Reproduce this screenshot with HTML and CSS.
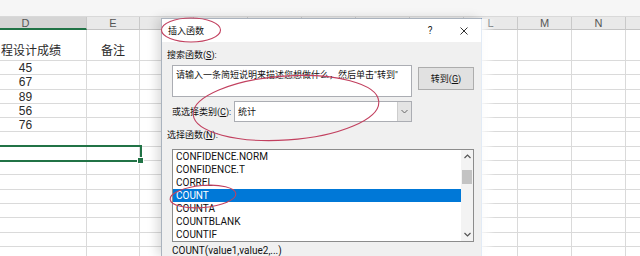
FILE: index.html
```html
<!DOCTYPE html>
<html>
<head>
<meta charset="utf-8">
<link rel="stylesheet" href="styles.css">
</head>
<body>
<div class="sheet">
  <div class="topbar"></div>
  <div class="row hdr">
    <div class="cell cd">D</div><div class="cell ce">E</div><div class="cell">F</div><div class="cell">G</div><div class="cell">H</div><div class="cell">I</div><div class="cell">J</div><div class="cell">K</div><div class="cell">L</div><div class="cell">M</div><div class="cell">N</div><div class="cell"></div>
  </div>
  <div class="row tall">
    <div class="cell cd lft">程设计成绩</div><div class="cell ce">备注</div><div class="cell"></div><div class="cell"></div><div class="cell"></div><div class="cell"></div><div class="cell"></div><div class="cell"></div><div class="cell"></div><div class="cell"></div><div class="cell"></div><div class="cell"></div>
  </div>
  <div class="row"><div class="cell cd">45</div><div class="cell ce"></div><div class="cell"></div><div class="cell"></div><div class="cell"></div><div class="cell"></div><div class="cell"></div><div class="cell"></div><div class="cell"></div><div class="cell"></div><div class="cell"></div><div class="cell"></div></div>
  <div class="row"><div class="cell cd">67</div><div class="cell ce"></div><div class="cell"></div><div class="cell"></div><div class="cell"></div><div class="cell"></div><div class="cell"></div><div class="cell"></div><div class="cell"></div><div class="cell"></div><div class="cell"></div><div class="cell"></div></div>
  <div class="row"><div class="cell cd">89</div><div class="cell ce"></div><div class="cell"></div><div class="cell"></div><div class="cell"></div><div class="cell"></div><div class="cell"></div><div class="cell"></div><div class="cell"></div><div class="cell"></div><div class="cell"></div><div class="cell"></div></div>
  <div class="row"><div class="cell cd">56</div><div class="cell ce"></div><div class="cell"></div><div class="cell"></div><div class="cell"></div><div class="cell"></div><div class="cell"></div><div class="cell"></div><div class="cell"></div><div class="cell"></div><div class="cell"></div><div class="cell"></div></div>
  <div class="row"><div class="cell cd">76</div><div class="cell ce"></div><div class="cell"></div><div class="cell"></div><div class="cell"></div><div class="cell"></div><div class="cell"></div><div class="cell"></div><div class="cell"></div><div class="cell"></div><div class="cell"></div><div class="cell"></div></div>
  <div class="row"><div class="cell cd"></div><div class="cell ce"></div><div class="cell"></div><div class="cell"></div><div class="cell"></div><div class="cell"></div><div class="cell"></div><div class="cell"></div><div class="cell"></div><div class="cell"></div><div class="cell"></div><div class="cell"></div></div>
  <div class="row"><div class="cell cd"></div><div class="cell ce"></div><div class="cell"></div><div class="cell"></div><div class="cell"></div><div class="cell"></div><div class="cell"></div><div class="cell"></div><div class="cell"></div><div class="cell"></div><div class="cell"></div><div class="cell"></div></div>
  <div class="row"><div class="cell cd"></div><div class="cell ce"></div><div class="cell"></div><div class="cell"></div><div class="cell"></div><div class="cell"></div><div class="cell"></div><div class="cell"></div><div class="cell"></div><div class="cell"></div><div class="cell"></div><div class="cell"></div></div>
  <div class="row"><div class="cell cd"></div><div class="cell ce"></div><div class="cell"></div><div class="cell"></div><div class="cell"></div><div class="cell"></div><div class="cell"></div><div class="cell"></div><div class="cell"></div><div class="cell"></div><div class="cell"></div><div class="cell"></div></div>
  <div class="row"><div class="cell cd"></div><div class="cell ce"></div><div class="cell"></div><div class="cell"></div><div class="cell"></div><div class="cell"></div><div class="cell"></div><div class="cell"></div><div class="cell"></div><div class="cell"></div><div class="cell"></div><div class="cell"></div></div>
  <div class="row"><div class="cell cd"></div><div class="cell ce"></div><div class="cell"></div><div class="cell"></div><div class="cell"></div><div class="cell"></div><div class="cell"></div><div class="cell"></div><div class="cell"></div><div class="cell"></div><div class="cell"></div><div class="cell"></div></div>
  <div class="row"><div class="cell cd"></div><div class="cell ce"></div><div class="cell"></div><div class="cell"></div><div class="cell"></div><div class="cell"></div><div class="cell"></div><div class="cell"></div><div class="cell"></div><div class="cell"></div><div class="cell"></div><div class="cell"></div></div>
  <div class="row"><div class="cell cd"></div><div class="cell ce"></div><div class="cell"></div><div class="cell"></div><div class="cell"></div><div class="cell"></div><div class="cell"></div><div class="cell"></div><div class="cell"></div><div class="cell"></div><div class="cell"></div><div class="cell"></div></div>
  <div class="row"><div class="cell cd"></div><div class="cell ce"></div><div class="cell"></div><div class="cell"></div><div class="cell"></div><div class="cell"></div><div class="cell"></div><div class="cell"></div><div class="cell"></div><div class="cell"></div><div class="cell"></div><div class="cell"></div></div>
</div>

<div class="selbox"><span class="handle"></span></div>

<div class="dlg">
  <div class="title">
    <span class="ttext">插入函数</span>
    <span class="sp"></span>
    <span class="tbtn q">?</span>
    <span class="tbtn"><svg width="8" height="8" viewBox="0 0 8 8"><path d="M0.5 0.5 L7.5 7.5 M7.5 0.5 L0.5 7.5" stroke="#333" stroke-width="1" fill="none"/></svg></span>
  </div>
  <div class="body">
    <div class="lbl l1">搜索函数(<u>S</u>):</div>
    <div class="search">
      <div class="tb">请输入一条简短说明来描述您想做什么，然后单击"转到"</div>
      <div class="btn">转到(<u>G</u>)</div>
    </div>
    <div class="cat">
      <div class="lbl clbl">或选择类别(<u>C</u>):</div>
      <div class="combo">
        <span class="ctxt">统计</span>
        <span class="arr"><svg width="7" height="5" viewBox="0 0 7 5"><path d="M0.5 1 L3.5 4 L6.5 1" stroke="#666" stroke-width="1" fill="none"/></svg></span>
      </div>
    </div>
    <div class="lbl l2">选择函数(<u>N</u>):</div>
    <div class="list">
      <div class="items">
        <div class="item">CONFIDENCE.NORM</div>
        <div class="item">CONFIDENCE.T</div>
        <div class="item">CORREL</div>
        <div class="item sel">COUNT</div>
        <div class="item">COUNTA</div>
        <div class="item">COUNTBLANK</div>
        <div class="item">COUNTIF</div>
      </div>
      <div class="sb">
        <span class="sarr"><svg width="7" height="5" viewBox="0 0 7 5"><path d="M0.5 4 L3.5 1 L6.5 4" stroke="#555" stroke-width="1.2" fill="none"/></svg></span>
        <span class="thumb"></span>
        <span class="sgap"></span>
        <span class="sarr"><svg width="7" height="5" viewBox="0 0 7 5"><path d="M0.5 1 L3.5 4 L6.5 1" stroke="#555" stroke-width="1.2" fill="none"/></svg></span>
      </div>
    </div>
    <div class="desc">COUNT(value1,value2,...)</div>
  </div>
</div>

<svg class="marks" width="640" height="256" viewBox="0 0 640 256">
  <ellipse cx="191" cy="30" rx="29.5" ry="12" fill="none" stroke="#c2405f" stroke-width="1.1"/>
  <ellipse cx="286" cy="108" rx="93" ry="32" transform="rotate(-4 286 108)" fill="none" stroke="#c2405f" stroke-width="1.1"/>
  <ellipse cx="203" cy="196.5" rx="33" ry="11" transform="rotate(-5 203 196.5)" fill="none" stroke="#c2405f" stroke-width="1.1"/>
</svg>
</body>
</html>
```

FILE: styles.css
```css
html, body {
  margin: 0;
  padding: 0;
}
body {
  width: 640px;
  height: 256px;
  overflow: hidden;
  position: relative;
  background: #fff;
  font-family: "Liberation Sans", "Noto Sans CJK SC", sans-serif;
}

.sheet {
  width: 640px;
  height: 256px;
  overflow: hidden;
}
.topbar {
  height: 17px;
  box-sizing: border-box;
  background: #f6f6f6;
  border-bottom: 1px solid #d9d9d9;
}
.row {
  display: flex;
  height: 14.3px;
}
.cell {
  flex: none;
  width: 54px;
  box-sizing: border-box;
  border-right: 1px solid #dadada;
  border-bottom: 1px solid #dadada;
  font-size: 12px;
  color: #2a2a2a;
  text-align: center;
  line-height: 15px;
  white-space: nowrap;
}
.cd {
  width: 122px;
  margin-left: -35px;
}
.ce {
  width: 53px;
}
.hdr {
  height: 13px;
}
.hdr .cell {
  background: #e9e9e9;
  border-right-color: #c9c9c9;
  border-bottom-color: #c4c4c4;
  font-size: 11px;
  line-height: 12px;
  color: #555;
}
.hdr .cd {
  background: #d5d5d5;
  border-bottom: 2px solid #217346;
}
.row.tall {
  height: 31px;
}
.tall .cell {
  display: flex;
  align-items: flex-end;
  justify-content: center;
  line-height: 14px;
  padding-bottom: 2px;
}
.tall .cell.lft {
  justify-content: flex-start;
  padding-left: 36px;
}

.selbox {
  position: absolute;
  left: -5px;
  top: 145px;
  width: 147px;
  height: 17px;
  box-sizing: border-box;
  border: 2px solid #217346;
}
.handle {
  position: absolute;
  right: -4px;
  bottom: -4px;
  width: 5px;
  height: 5px;
  background: #217346;
  border: 1px solid #fff;
}

.dlg {
  position: absolute;
  left: 161px;
  top: 18px;
  width: 321px;
  height: 238px;
  box-sizing: border-box;
  border: 1px solid #aab3be;
  border-right-color: #5b8fcd;
  border-bottom: none;
  background: #f0f0f0;
  box-shadow: -4px 0 10px rgba(0, 0, 0, 0.14);
  font-family: Roboto, "Noto Sans CJK SC", sans-serif;
  color: #111;
}
.dlg::after {
  content: "";
  position: absolute;
  left: 100%;
  top: 0;
  width: 14px;
  height: 100%;
  background: linear-gradient(to right, rgba(255, 255, 255, 0.85), rgba(255, 255, 255, 0));
}
.title {
  height: 23px;
  background: #fff;
  display: flex;
  align-items: center;
  padding-left: 6px;
  font-size: 9px;
}
.sp {
  flex: 1;
}
.tbtn {
  width: 34px;
  height: 23px;
  display: flex;
  align-items: center;
  justify-content: center;
}
.tbtn.q {
  font-size: 10px;
  color: #222;
}
.body {
  padding-left: 5px;
}
.lbl {
  font-size: 9px;
  line-height: 10px;
}
.l1 {
  margin-top: 8px;
}
.search {
  display: flex;
  margin-top: 5px;
  margin-left: 5px;
}
.tb {
  width: 240px;
  height: 32px;
  box-sizing: border-box;
  border: 1px solid #abadb3;
  background: #fff;
  font-size: 9px;
  line-height: 10px;
  padding: 4px 0 0 3px;
  white-space: nowrap;
  overflow: hidden;
}
.btn {
  margin-left: 6px;
  margin-top: 2px;
  width: 56px;
  height: 23px;
  box-sizing: border-box;
  border: 1px solid #adadad;
  background: #e1e1e1;
  font-size: 9px;
  display: flex;
  align-items: center;
  justify-content: center;
}
.cat {
  display: flex;
  align-items: center;
  margin-top: 4px;
  margin-left: 5px;
}
.clbl {
  width: 62px;
}
.combo {
  width: 178px;
  height: 21px;
  box-sizing: border-box;
  border: 1px solid #abadb3;
  background: #fff;
  display: flex;
  align-items: center;
  padding-left: 3px;
  font-size: 9px;
}
.ctxt {
  flex: 1;
}
.arr {
  width: 13px;
  height: 19px;
  background: #e4e4e4;
  border-left: 1px solid #cdcdcd;
  display: flex;
  align-items: center;
  justify-content: center;
}
.l2 {
  margin-top: 8px;
}
.list {
  margin-top: 9px;
  margin-left: 5px;
  width: 302px;
  height: 93px;
  box-sizing: border-box;
  border: 1px solid #8c8c8c;
  background: #fff;
  display: flex;
}
.items {
  flex: 1;
}
.item {
  height: 13px;
  line-height: 13px;
  padding-left: 3px;
  font-size: 10px;
  color: #111;
}
.item.sel {
  background: #0078d7;
  color: #fff;
}
.sb {
  width: 12px;
  background: #f3f3f3;
  display: flex;
  flex-direction: column;
  align-items: center;
}
.sarr {
  height: 13px;
  display: flex;
  align-items: center;
  justify-content: center;
}
.thumb {
  margin-top: 7px;
  width: 10px;
  height: 14px;
  background: #c3c3c3;
}
.sgap {
  flex: 1;
}
.desc {
  margin-top: 3px;
  margin-left: 5px;
  font-size: 10px;
  line-height: 12px;
}

.marks {
  position: absolute;
  left: 0;
  top: 0;
  pointer-events: none;
}
```
